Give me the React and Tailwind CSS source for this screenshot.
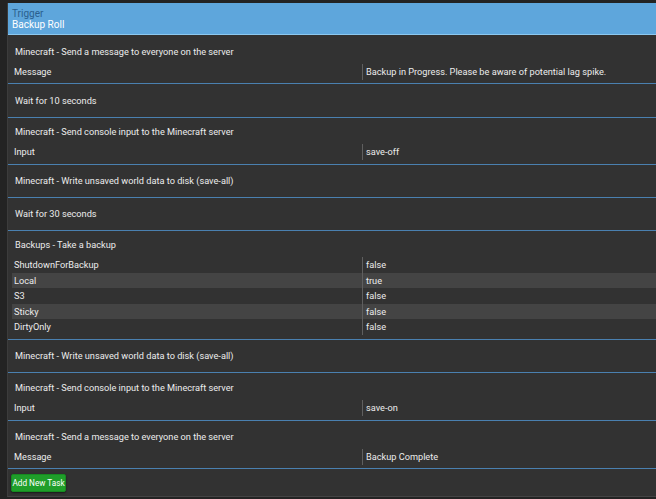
const TASKS = [
  { title: 'Minecraft - Send a message to everyone on the server', pt: 'pt-[10px]', pb: 'pb-[3px]', params: [['Message', 'Backup in Progress. Please be aware of potential lag spike.']] },
  { title: 'Wait for 10 seconds', h: 'h-[34px]' },
  { title: 'Minecraft - Send console input to the Minecraft server', params: [['Input', 'save-off']] },
  { title: 'Minecraft - Write unsaved world data to disk (save-all)' },
  { title: 'Wait for 30 seconds' },
  {
    title: 'Backups - Take a backup',
    params: [
      ['ShutdownForBackup', 'false'],
      ['Local', 'true'],
      ['S3', 'false'],
      ['Sticky', 'false'],
      ['DirtyOnly', 'false'],
    ],
  },
  { title: 'Minecraft - Write unsaved world data to disk (save-all)' },
  { title: 'Minecraft - Send console input to the Minecraft server', pt: 'pt-[8px]', params: [['Input', 'save-on']] },
  { title: 'Minecraft - Send a message to everyone on the server', pt: 'pt-[9px]', pb: 'pb-[3px]', params: [['Message', 'Backup Complete']] },
]

function ParamRow({ name, value, index }) {
  const striped = index % 2 === 1
  const h = index % 2 === 0 ? 'h-[16px]' : 'h-[15px]'
  return (
    <div className={`flex ${h} items-center ${striped ? 'bg-[#444444]' : ''}`}>
      <div className="w-[350px] pl-[2px] leading-none">{name}</div>
      <div className="flex-1 h-full flex items-center border-l border-[#5f5f5f] pl-[3px] leading-none">{value}</div>
    </div>
  )
}

function Task({ task }) {
  if (!task.params) {
    return (
      <div className={`${task.h || 'h-[33px]'} flex items-center pl-[7px] border-b border-[#4a80b0]`}>
        {task.title}
      </div>
    )
  }
  return (
    <div className={`${task.pt || 'pt-[7px]'} ${task.pb || 'pb-[4px]'} border-b border-[#4a80b0]`}>
      <div className="h-[14px] flex items-center pl-[7px]">{task.title}</div>
      <div className="mt-[5px] ml-[4px]">
        {task.params.map(([name, value], i) => (
          <ParamRow key={name} name={name} value={value} index={i} />
        ))}
      </div>
    </div>
  )
}

export default function App() {
  return (
    <div className="h-[499px] overflow-hidden bg-[#232323] pl-[7px] pt-[3px] font-['Roboto',sans-serif] text-[9.2px] text-[#ececec]">
      <div className="bg-[#323232] border-l border-[#3c3c3c] border-b border-b-[#444]">
        {/* Trigger header */}
        <div className="h-[32px] bg-[#5ea6dc] border-b border-[#8cc8f0] pl-[4px] pt-[5px] leading-[11px] text-[10px]">
          <div className="text-[#2a5f8e]">Trigger</div>
          <div className="text-white">Backup Roll</div>
        </div>

        {TASKS.map((task, i) => (
          <Task key={i} task={task} />
        ))}

        <div className="pt-[5px] pb-[4px] pl-[3px]">
          <button className="h-[18px] w-[55px] whitespace-nowrap rounded-[2px] bg-[#1f9e2a] border border-[#178a21] text-white text-[8.2px] leading-none shadow-[0_1px_2px_rgba(0,0,0,0.5)]">
            Add New Task
          </button>
        </div>
      </div>
    </div>
  )
}
